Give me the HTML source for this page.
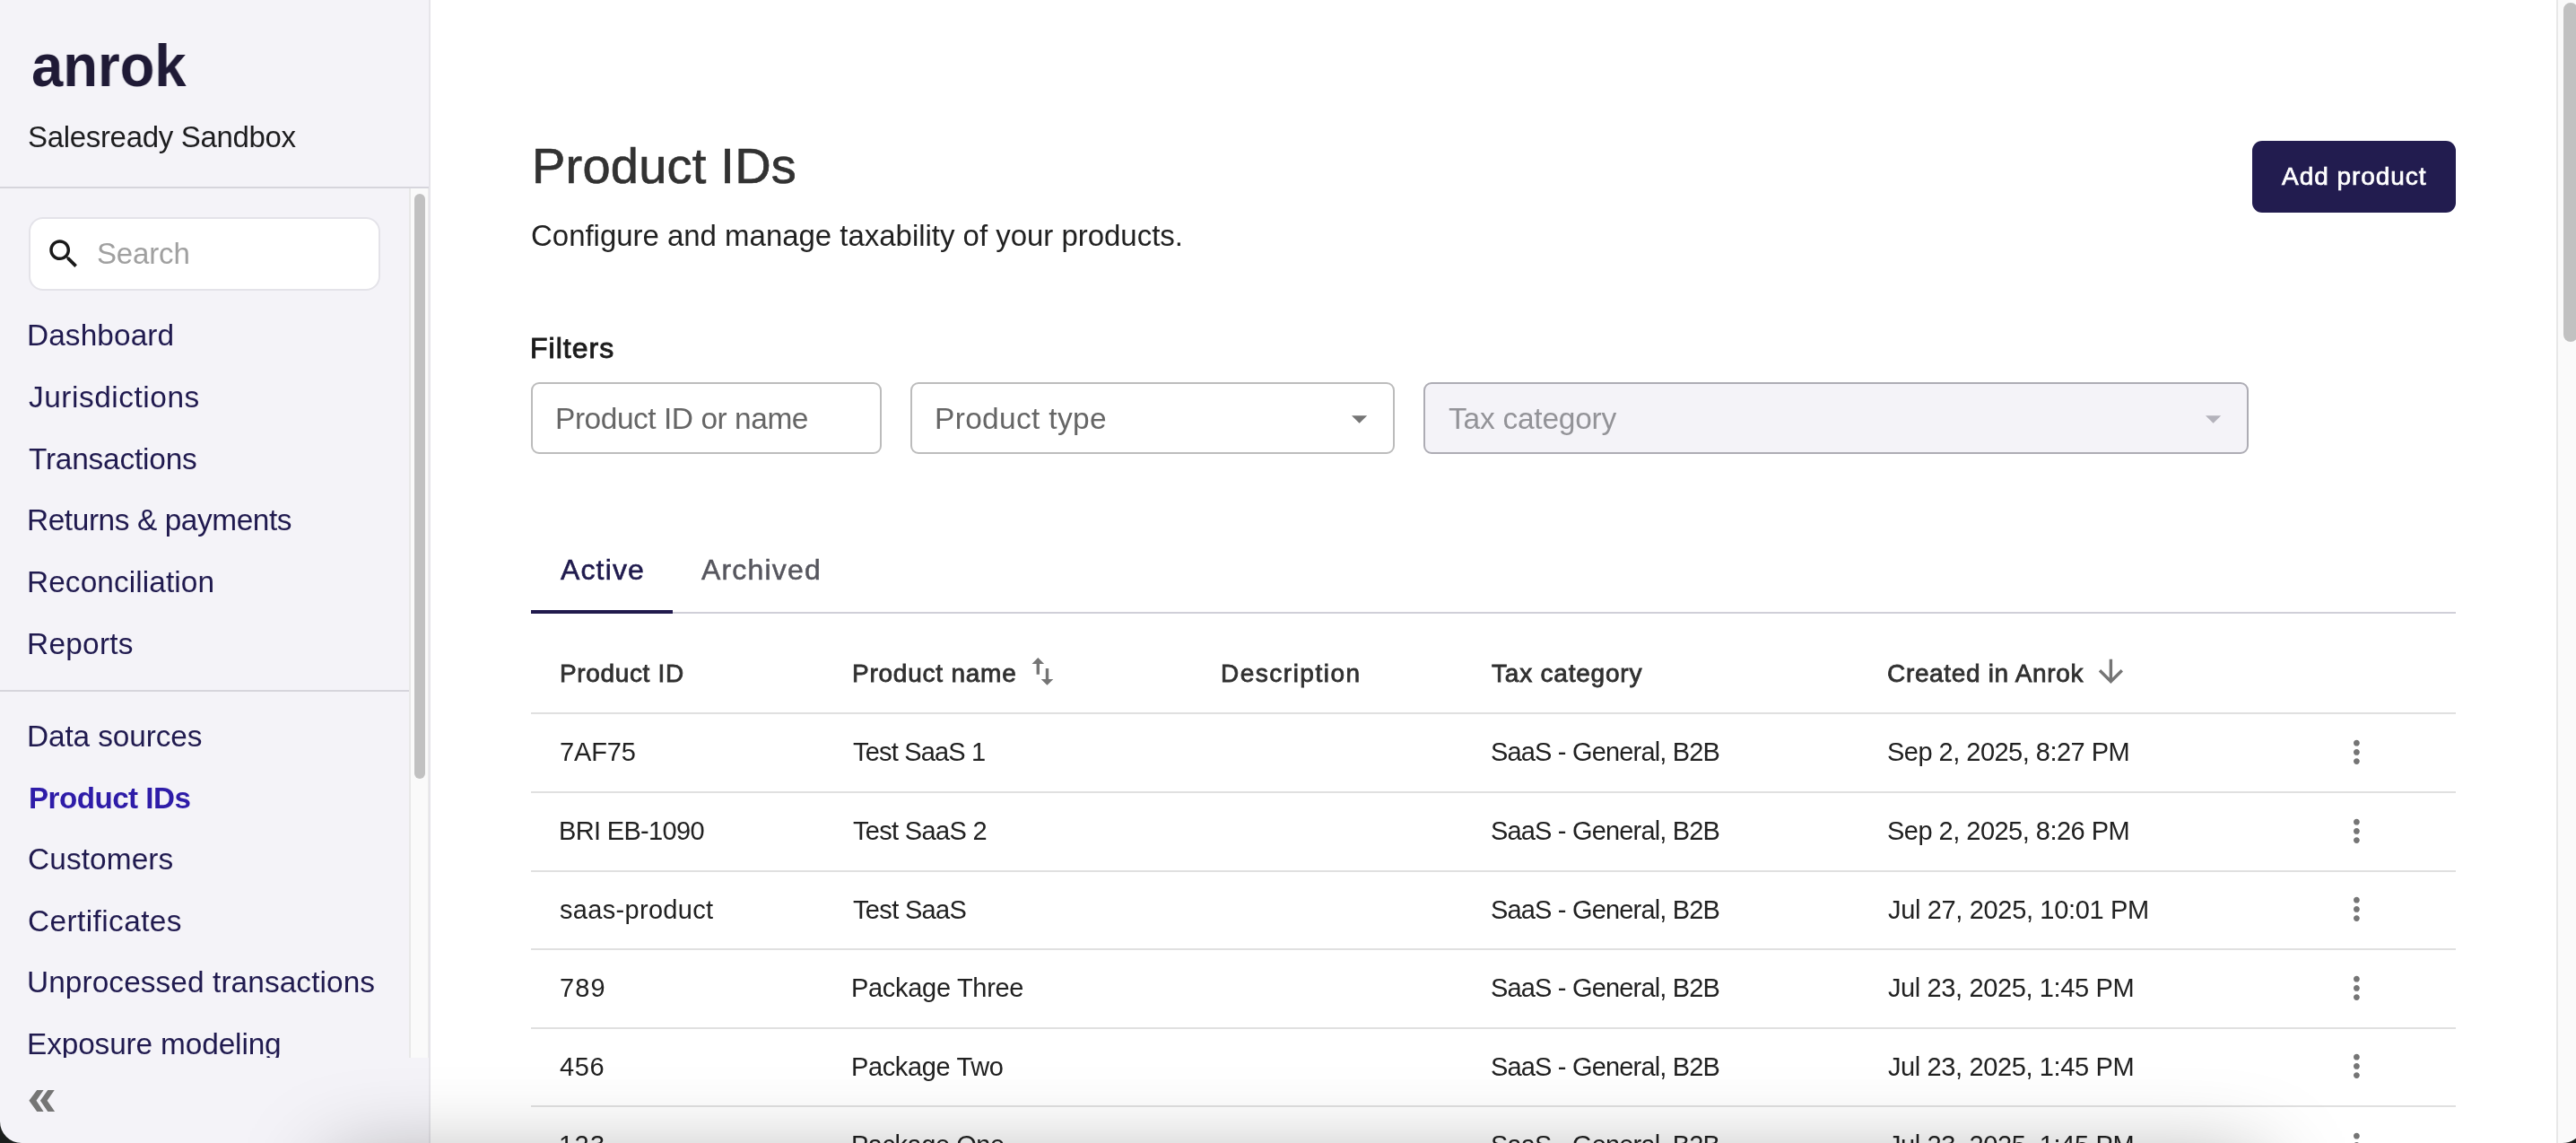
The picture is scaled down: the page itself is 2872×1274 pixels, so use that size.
<!DOCTYPE html>
<html lang="en"><head><meta charset="utf-8"><title>Product IDs - Anrok</title>
<style>
html,body{margin:0;padding:0;}
body{width:2872px;height:1274px;overflow:hidden;background:#fff;position:relative;font-family:"Liberation Sans",sans-serif;}
.t{position:absolute;white-space:pre;margin:0;will-change:transform;}
.b{position:absolute;box-sizing:border-box;}
svg{position:absolute;overflow:visible;}
</style></head><body>
<div class="b" style="left:0px;top:0px;width:478px;height:1274px;background:#f4f3f8;"></div>
<div class="b" style="left:478px;top:0px;width:2px;height:1274px;background:#e6e5ea;"></div>
<div class="t" style="left:35.10px;top:40.43px;font-size:66px;line-height:66px;color:#1f1a36;letter-spacing:0.000px;font-weight:700;transform:scaleX(0.9603);transform-origin:0 0;">anrok</div>
<div class="t" style="left:31.02px;top:135.82px;font-size:33px;line-height:33px;color:#1d1d1f;letter-spacing:-0.322px;">Salesready Sandbox</div>
<div class="b" style="left:0px;top:208px;width:478px;height:2px;background:#d6d5dc;"></div>
<div class="b" style="left:456px;top:210px;width:2px;height:969px;background:#e8e8e8;"></div>
<div class="b" style="left:458px;top:210px;width:20px;height:969px;background:#fafafa;"></div>
<div class="b" style="left:476.5px;top:210px;width:1.5px;height:969px;background:#ececec;"></div>
<div class="b" style="left:462px;top:216px;width:12px;height:652px;background:#c1c1c1;border-radius:6px;"></div>
<div class="b" style="left:32px;top:242px;width:392px;height:82px;background:#fff;border:2px solid #e4e3e9;border-radius:16px;"></div>
<svg style="left:49.6px;top:261.7px" width="42.1" height="42.1" viewBox="0 0 24 24"><path fill="#1a1a1a" d="M15.5 14h-.79l-.28-.27C15.41 12.59 16 11.11 16 9.5 16 5.91 13.09 3 9.5 3S3 5.91 3 9.5 5.91 16 9.5 16c1.61 0 3.09-.59 4.23-1.57l.27.28v.79l5 4.99L20.49 19l-4.99-5zm-6 0C7.01 14 5 11.99 5 9.5S7.01 5 9.5 5 14 7.01 14 9.5 11.99 14 9.5 14z"/></svg>
<div class="t" style="left:107.52px;top:265.97px;font-size:33px;line-height:33px;color:#a0a0a0;letter-spacing:-0.163px;">Search</div>
<div class="t" style="left:30.13px;top:356.93px;font-size:33.4px;line-height:33.4px;color:#201a4f;letter-spacing:0.090px;">Dashboard</div>
<div class="t" style="left:32.30px;top:426.03px;font-size:33.4px;line-height:33.4px;color:#201a4f;letter-spacing:0.539px;">Jurisdictions</div>
<div class="t" style="left:32.13px;top:494.73px;font-size:33.4px;line-height:33.4px;color:#201a4f;letter-spacing:-0.201px;">Transactions</div>
<div class="t" style="left:30.13px;top:563.43px;font-size:33.4px;line-height:33.4px;color:#201a4f;letter-spacing:-0.410px;">Returns &amp; payments</div>
<div class="t" style="left:30.13px;top:632.13px;font-size:33.4px;line-height:33.4px;color:#201a4f;letter-spacing:0.094px;">Reconciliation</div>
<div class="t" style="left:30.13px;top:700.83px;font-size:33.4px;line-height:33.4px;color:#201a4f;letter-spacing:0.274px;">Reports</div>
<div class="b" style="left:0px;top:769px;width:456px;height:2px;background:#d6d5dc;"></div>
<div class="t" style="left:30.13px;top:803.93px;font-size:33.4px;line-height:33.4px;color:#201a4f;letter-spacing:-0.126px;">Data sources</div>
<div class="t" style="left:31.13px;top:941.33px;font-size:33.4px;line-height:33.4px;color:#201a4f;letter-spacing:0.106px;">Customers</div>
<div class="t" style="left:31.13px;top:1009.63px;font-size:33.4px;line-height:33.4px;color:#201a4f;letter-spacing:0.413px;">Certificates</div>
<div class="t" style="left:30.29px;top:1078.33px;font-size:33.4px;line-height:33.4px;color:#201a4f;letter-spacing:0.086px;">Unprocessed transactions</div>
<div class="t" style="left:30.13px;top:1147.43px;font-size:33.4px;line-height:33.4px;color:#201a4f;letter-spacing:-0.135px;">Exposure modeling</div>
<div class="t" style="left:31.84px;top:872.80px;font-size:33.2px;line-height:33.2px;color:#2e1ca8;letter-spacing:-0.537px;font-weight:700;">Product IDs</div>
<div class="b" style="left:0px;top:1179px;width:478px;height:95px;background:#f4f3f8;"></div>
<svg style="left:0;top:0" width="100" height="1274" viewBox="0 0 100 1274"><path fill="#757575" d="M41.2 1215h7.4l-8.1 11.7 8.1 12.2h-7.4l-8.8-12.2zM53.3 1215h7.4l-8.1 11.7 8.5 12.2h-7.8l-8.4-12.2z"/></svg>
<div class="t" style="left:592.67px;top:157.10px;font-size:56px;line-height:56px;color:#323232;letter-spacing:0.224px;-webkit-text-stroke:0.7px #323232;">Product IDs</div>
<div class="t" style="left:591.65px;top:245.97px;font-size:33px;line-height:33px;color:#212121;letter-spacing:-0.028px;">Configure and manage taxability of your products.</div>
<div class="b" style="left:2511px;top:157px;width:227px;height:80px;background:#221c4f;border-radius:11px;"></div>
<div class="t" style="left:2544.35px;top:183.30px;font-size:28px;line-height:28px;color:#fff;letter-spacing:0.952px;-webkit-text-stroke:0.7px #fff;">Add product</div>
<div class="t" style="left:591.49px;top:372.21px;font-size:32px;line-height:32px;color:#1c1c1c;letter-spacing:1.007px;-webkit-text-stroke:0.9px #1c1c1c;">Filters</div>
<div class="b" style="left:592px;top:426px;width:391px;height:80px;background:#fff;border:2px solid #bcbcbc;border-radius:9px;"></div>
<div class="t" style="left:618.92px;top:449.94px;font-size:33.5px;line-height:33.5px;color:#666666;letter-spacing:-0.468px;">Product ID or name</div>
<div class="b" style="left:1015px;top:426px;width:540px;height:80px;background:#fff;border:2px solid #bcbcbc;border-radius:9px;"></div>
<div class="t" style="left:1041.92px;top:449.94px;font-size:33.5px;line-height:33.5px;color:#666666;letter-spacing:0.317px;">Product type</div>
<svg style="left:1507.1px;top:463px" width="17.200" height="8.900" viewBox="0 0 10 5"><path fill="#757575" d="M0 0h10L5 5z"/></svg>
<div class="b" style="left:1587px;top:426px;width:920px;height:80px;background:#f4f3f8;border:2px solid #adacb4;border-radius:9px;"></div>
<div class="t" style="left:1614.93px;top:449.94px;font-size:33.5px;line-height:33.5px;color:#939398;letter-spacing:-0.243px;">Tax category</div>
<svg style="left:2459px;top:463px" width="17.200" height="8.900" viewBox="0 0 10 5"><path fill="#b3b2bb" d="M0 0h10L5 5z"/></svg>
<div class="b" style="left:592px;top:682px;width:2146px;height:2px;background:#d0cfd8;"></div>
<div class="b" style="left:592px;top:680px;width:158px;height:4px;background:#211a4d;"></div>
<div class="t" style="left:624.70px;top:618.51px;font-size:32px;line-height:32px;color:#1f1a4d;letter-spacing:1.140px;-webkit-text-stroke:0.6px #1f1a4d;">Active</div>
<div class="t" style="left:782.45px;top:618.51px;font-size:32px;line-height:32px;color:#56565e;letter-spacing:1.171px;-webkit-text-stroke:0.5px #56565e;">Archived</div>
<div class="t" style="left:624.16px;top:736.60px;font-size:28px;line-height:28px;color:#303030;letter-spacing:0.649px;-webkit-text-stroke:0.8px #303030;">Product ID</div>
<div class="t" style="left:950.16px;top:736.60px;font-size:28px;line-height:28px;color:#303030;letter-spacing:0.764px;-webkit-text-stroke:0.8px #303030;">Product name</div>
<div class="t" style="left:1360.86px;top:736.60px;font-size:28px;line-height:28px;color:#303030;letter-spacing:1.506px;-webkit-text-stroke:0.8px #303030;">Description</div>
<div class="t" style="left:1663.44px;top:736.60px;font-size:28px;line-height:28px;color:#303030;letter-spacing:0.791px;-webkit-text-stroke:0.8px #303030;">Tax category</div>
<div class="t" style="left:2104.00px;top:736.60px;font-size:28px;line-height:28px;color:#303030;letter-spacing:0.667px;-webkit-text-stroke:0.8px #303030;">Created in Anrok</div>
<svg style="left:1142.3px;top:728.3px" width="40.8" height="40.8" viewBox="0 0 24 24"><path fill="#757575" d="M9 3L5 6.99h3V14h2V6.99h3L9 3zm7 14.01V10h-2v7.01h-3L15 21l4-3.99h-3z"/></svg>
<svg style="left:2332.5px;top:728.2px" width="40.8" height="40.8" viewBox="0 0 24 24"><path fill="#757575" d="M20 12l-1.41-1.41L13 16.17V4h-2v12.17l-5.58-5.59L4 12l8 8 8-8z"/></svg>
<div class="b" style="left:592px;top:794px;width:2146px;height:2px;background:#e0e0e0;"></div>
<div class="t" style="left:623.55px;top:824.45px;font-size:29px;line-height:29px;color:#212121;letter-spacing:-0.124px;">7AF75</div>
<div class="t" style="left:950.52px;top:824.45px;font-size:29px;line-height:29px;color:#212121;letter-spacing:-0.823px;">Test SaaS 1</div>
<div class="t" style="left:1662.29px;top:824.45px;font-size:29px;line-height:29px;color:#212121;letter-spacing:-0.826px;">SaaS - General, B2B</div>
<div class="t" style="left:2103.70px;top:824.45px;font-size:29px;line-height:29px;color:#212121;letter-spacing:-0.516px;">Sep 2, 2025, 8:27 PM</div>
<svg style="left:2606.7px;top:817.9px" width="40.8" height="40.8" viewBox="0 0 24 24"><path fill="#757575" d="M12 8c1.1 0 2-.9 2-2s-.9-2-2-2-2 .9-2 2 .9 2 2 2zm0 2c-1.100 0-2 .9-2 2s.9 2 2 2 2-.9 2-2-.9-2-2-2zm0 6c-1.100 0-2 .9-2 2s.9 2 2 2 2-.9 2-2-.9-2-2-2z"/></svg>
<div class="b" style="left:592px;top:882.0px;width:2146px;height:2px;background:#e0e0e0;"></div>
<div class="t" style="left:622.68px;top:912.05px;font-size:29px;line-height:29px;color:#212121;letter-spacing:-0.668px;">BRI EB-1090</div>
<div class="t" style="left:950.52px;top:912.05px;font-size:29px;line-height:29px;color:#212121;letter-spacing:-0.678px;">Test SaaS 2</div>
<div class="t" style="left:1662.29px;top:912.05px;font-size:29px;line-height:29px;color:#212121;letter-spacing:-0.826px;">SaaS - General, B2B</div>
<div class="t" style="left:2103.70px;top:912.05px;font-size:29px;line-height:29px;color:#212121;letter-spacing:-0.516px;">Sep 2, 2025, 8:26 PM</div>
<svg style="left:2606.7px;top:905.5px" width="40.8" height="40.8" viewBox="0 0 24 24"><path fill="#757575" d="M12 8c1.1 0 2-.9 2-2s-.9-2-2-2-2 .9-2 2 .9 2 2 2zm0 2c-1.100 0-2 .9-2 2s.9 2 2 2 2-.9 2-2-.9-2-2-2zm0 6c-1.100 0-2 .9-2 2s.9 2 2 2 2-.9 2-2-.9-2-2-2z"/></svg>
<div class="b" style="left:592px;top:969.6px;width:2146px;height:2px;background:#e0e0e0;"></div>
<div class="t" style="left:624.13px;top:999.65px;font-size:29px;line-height:29px;color:#212121;letter-spacing:0.318px;">saas-product</div>
<div class="t" style="left:950.52px;top:999.65px;font-size:29px;line-height:29px;color:#212121;letter-spacing:-0.664px;">Test SaaS</div>
<div class="t" style="left:1662.29px;top:999.65px;font-size:29px;line-height:29px;color:#212121;letter-spacing:-0.826px;">SaaS - General, B2B</div>
<div class="t" style="left:2104.57px;top:999.65px;font-size:29px;line-height:29px;color:#212121;letter-spacing:-0.341px;">Jul 27, 2025, 10:01 PM</div>
<svg style="left:2606.7px;top:993.1px" width="40.8" height="40.8" viewBox="0 0 24 24"><path fill="#757575" d="M12 8c1.1 0 2-.9 2-2s-.9-2-2-2-2 .9-2 2 .9 2 2 2zm0 2c-1.100 0-2 .9-2 2s.9 2 2 2 2-.9 2-2-.9-2-2-2zm0 6c-1.100 0-2 .9-2 2s.9 2 2 2 2-.9 2-2-.9-2-2-2z"/></svg>
<div class="b" style="left:592px;top:1057.2px;width:2146px;height:2px;background:#e0e0e0;"></div>
<div class="t" style="left:623.55px;top:1087.25px;font-size:29px;line-height:29px;color:#212121;letter-spacing:1.135px;">789</div>
<div class="t" style="left:948.78px;top:1087.25px;font-size:29px;line-height:29px;color:#212121;letter-spacing:-0.305px;">Package Three</div>
<div class="t" style="left:1662.29px;top:1087.25px;font-size:29px;line-height:29px;color:#212121;letter-spacing:-0.826px;">SaaS - General, B2B</div>
<div class="t" style="left:2104.57px;top:1087.25px;font-size:29px;line-height:29px;color:#212121;letter-spacing:-0.379px;">Jul 23, 2025, 1:45 PM</div>
<svg style="left:2606.7px;top:1080.7px" width="40.8" height="40.8" viewBox="0 0 24 24"><path fill="#757575" d="M12 8c1.1 0 2-.9 2-2s-.9-2-2-2-2 .9-2 2 .9 2 2 2zm0 2c-1.100 0-2 .9-2 2s.9 2 2 2 2-.9 2-2-.9-2-2-2zm0 6c-1.100 0-2 .9-2 2s.9 2 2 2 2-.9 2-2-.9-2-2-2z"/></svg>
<div class="b" style="left:592px;top:1144.8px;width:2146px;height:2px;background:#e0e0e0;"></div>
<div class="t" style="left:624.42px;top:1174.85px;font-size:29px;line-height:29px;color:#212121;letter-spacing:0.627px;">456</div>
<div class="t" style="left:948.78px;top:1174.85px;font-size:29px;line-height:29px;color:#212121;letter-spacing:-0.369px;">Package Two</div>
<div class="t" style="left:1662.29px;top:1174.85px;font-size:29px;line-height:29px;color:#212121;letter-spacing:-0.826px;">SaaS - General, B2B</div>
<div class="t" style="left:2104.57px;top:1174.85px;font-size:29px;line-height:29px;color:#212121;letter-spacing:-0.379px;">Jul 23, 2025, 1:45 PM</div>
<svg style="left:2606.7px;top:1168.3px" width="40.8" height="40.8" viewBox="0 0 24 24"><path fill="#757575" d="M12 8c1.1 0 2-.9 2-2s-.9-2-2-2-2 .9-2 2 .9 2 2 2zm0 2c-1.100 0-2 .9-2 2s.9 2 2 2 2-.9 2-2-.9-2-2-2zm0 6c-1.100 0-2 .9-2 2s.9 2 2 2 2-.9 2-2-.9-2-2-2z"/></svg>
<div class="b" style="left:592px;top:1232.4px;width:2146px;height:2px;background:#e0e0e0;"></div>
<div class="t" style="left:622.83px;top:1262.45px;font-size:29px;line-height:29px;color:#212121;letter-spacing:1.425px;">123</div>
<div class="t" style="left:948.78px;top:1262.45px;font-size:29px;line-height:29px;color:#212121;letter-spacing:-0.472px;">Package One</div>
<div class="t" style="left:1662.29px;top:1262.45px;font-size:29px;line-height:29px;color:#212121;letter-spacing:-0.826px;">SaaS - General, B2B</div>
<div class="t" style="left:2104.57px;top:1262.45px;font-size:29px;line-height:29px;color:#212121;letter-spacing:-0.379px;">Jul 23, 2025, 1:45 PM</div>
<svg style="left:2606.7px;top:1255.9px" width="40.8" height="40.8" viewBox="0 0 24 24"><path fill="#757575" d="M12 8c1.1 0 2-.9 2-2s-.9-2-2-2-2 .9-2 2 .9 2 2 2zm0 2c-1.100 0-2 .9-2 2s.9 2 2 2 2-.9 2-2-.9-2-2-2zm0 6c-1.100 0-2 .9-2 2s.9 2 2 2 2-.9 2-2-.9-2-2-2z"/></svg>
<div class="b" style="left:592px;top:1320.0px;width:2146px;height:2px;background:#e0e0e0;"></div>
<div class="b" style="left:2850px;top:0px;width:2px;height:1274px;background:#e8e8e8;"></div>
<div class="b" style="left:2852px;top:0px;width:20px;height:1274px;background:#fafafa;"></div>
<div class="b" style="left:2858px;top:3px;width:16px;height:378px;background:#c1c1c1;border-radius:8px;"></div>
<div class="b" style="left:370px;top:1300px;width:2150px;height:100px;box-shadow:0 0 100px 0 rgba(0,0,0,.38);"></div>
<svg style="left:0;top:1244px" width="30" height="30" viewBox="0 0 30 30"><path fill="#1b1f1d" d="M0 6A24 24 0 0 0 24 30H0z"/></svg>
<svg style="left:2852px;top:1254px" width="20" height="20" viewBox="0 0 20 20"><path fill="#1b1f1d" d="M5 20A24 24 0 0 0 20 14.700V20z"/></svg>
</body></html>
